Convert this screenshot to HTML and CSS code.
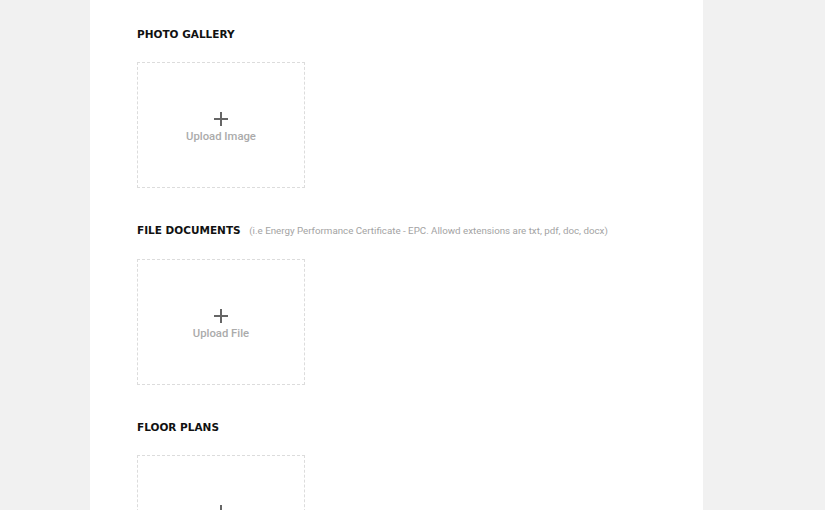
FILE: index.html
```html
<!DOCTYPE html>
<html>
<head>
<meta charset="utf-8">
<link rel="stylesheet" href="styles.css">
</head>
<body>
<div class="page">
  <section class="section">
    <h3 class="title">PHOTO GALLERY</h3>
    <div class="upload">
      <svg class="plus" width="16" height="16" viewBox="0 0 16 16"><path d="M8 1v14M1 8h14" stroke="#666" stroke-width="2"/></svg>
      <span class="label">Upload Image</span>
    </div>
  </section>
  <section class="section">
    <h3 class="title">FILE DOCUMENTS <span class="note">(i.e Energy Performance Certificate - EPC. Allowd extensions are txt, pdf, doc, docx)</span></h3>
    <div class="upload">
      <svg class="plus" width="16" height="16" viewBox="0 0 16 16"><path d="M8 1v14M1 8h14" stroke="#666" stroke-width="2"/></svg>
      <span class="label">Upload File</span>
    </div>
  </section>
  <section class="section">
    <h3 class="title">FLOOR PLANS</h3>
    <div class="upload">
      <svg class="plus" width="16" height="16" viewBox="0 0 16 16"><path d="M8 1v14M1 8h14" stroke="#666" stroke-width="2"/></svg>
      <span class="label">Upload Image</span>
    </div>
  </section>
</div>
</body>
</html>
```
FILE: styles.css
```css
html, body {
  margin: 0;
  padding: 0;
  background: #f1f1f1;
  height: 100%;
  overflow: hidden;
}
.page {
  margin-left: 90px;
  width: 566px;
  min-height: 100%;
  background: #fff;
  padding: 27px 0 0 47px;
  box-sizing: content-box;
}
.section {
  margin-bottom: 35px;
}
.title {
  margin: 0 0 21px 0;
  font-family: "DejaVu Sans", sans-serif;
  font-weight: bold;
  font-size: 10.5px;
  line-height: 14px;
  color: #111;
  letter-spacing: 0;
}
.note {
  font-family: Roboto, "Liberation Sans", sans-serif;
  font-weight: normal;
  font-size: 9.75px;
  color: #a3a3a3;
  margin-left: 5px;
  letter-spacing: 0;
}
.upload {
  width: 166px;
  height: 124px;
  border: 1px dashed #dcdcdc;
  display: flex;
  flex-direction: column;
  align-items: center;
  justify-content: center;
}
.plus {
  display: block;
  margin-top: 4px;
}
.label {
  margin-top: 3px;
  font-family: Roboto, "Liberation Sans", sans-serif;
  font-weight: 500;
  font-size: 11.3px;
  line-height: 14px;
  color: #ababab;
}
```
